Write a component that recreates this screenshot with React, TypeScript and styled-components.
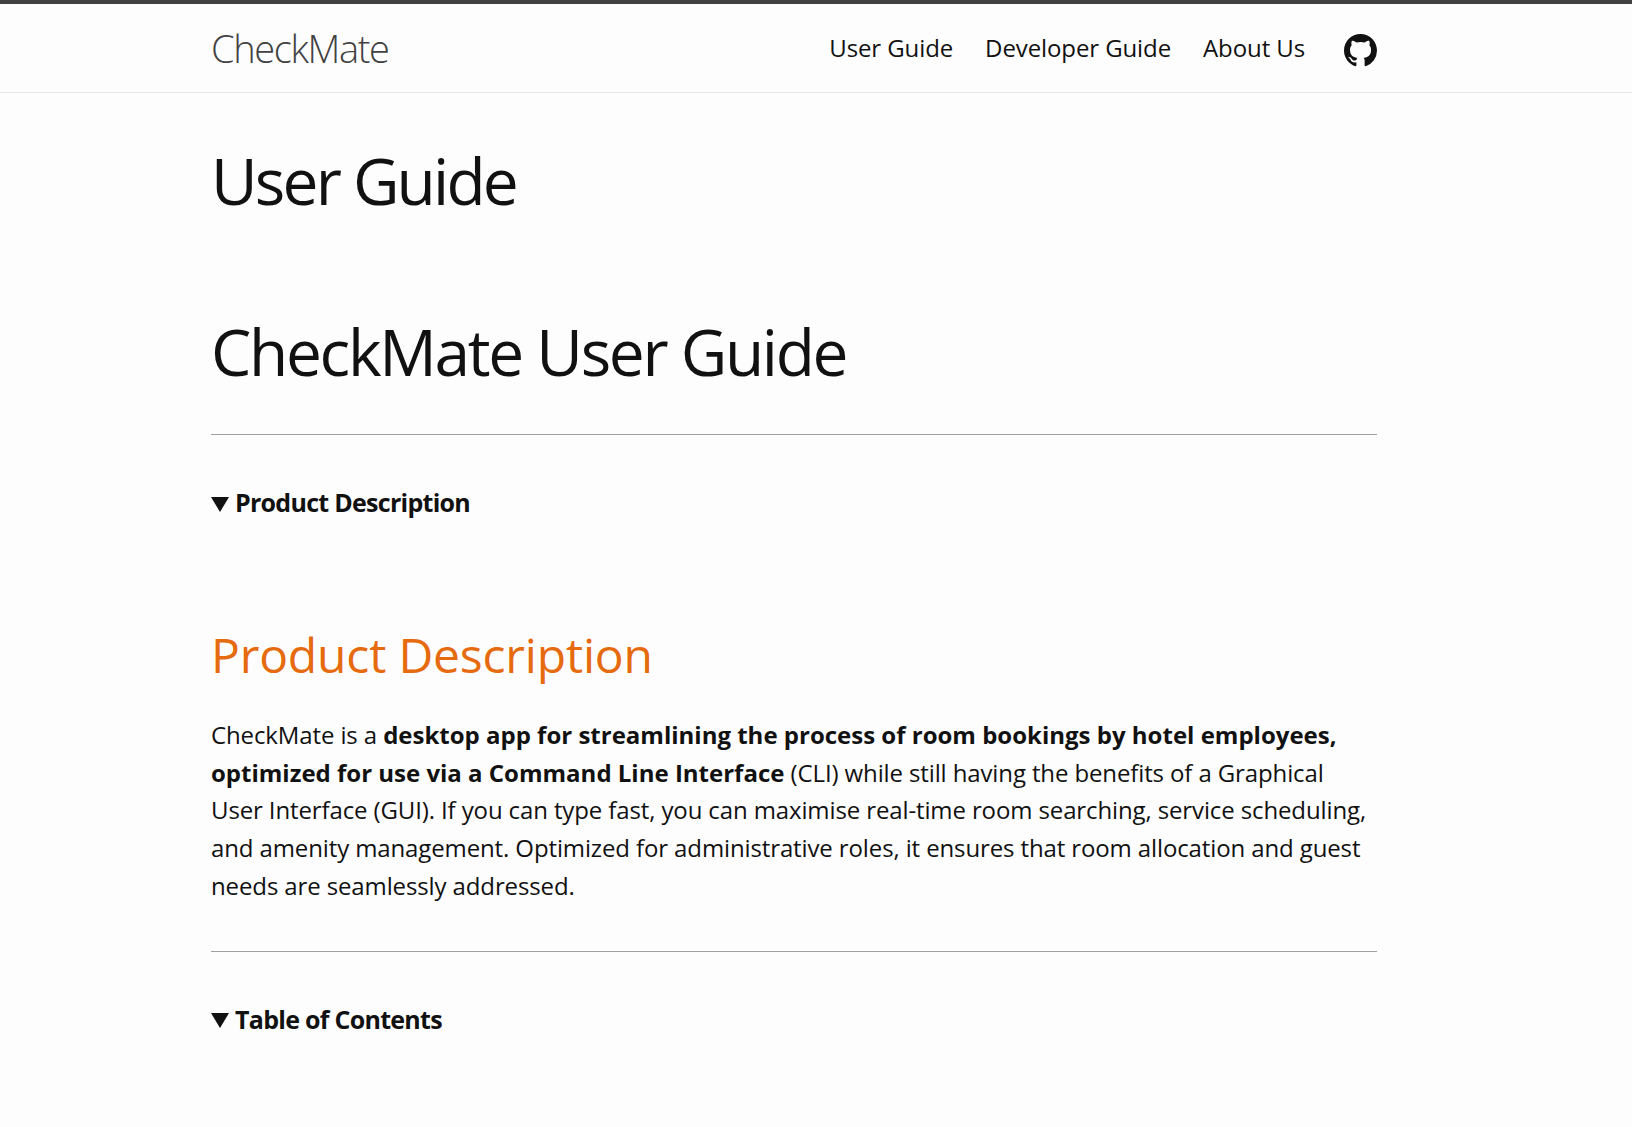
import React from 'react';
import styled, { createGlobalStyle } from 'styled-components';

const GlobalStyle = createGlobalStyle`
  html, body {
    margin: 0;
    padding: 0;
    background: #fdfdfd;
    color: #111111;
    font-family: 'Open Sans', 'Liberation Sans', sans-serif;
  }
`;

// header  --------------------------------------------------
const Header = styled.header`
  height: 88px;
  border-top: 4px solid #424242;
  border-bottom: 1px solid #e8e8e8;
`;

const Wrapper = styled.div`
  width: 1166px;
  margin-left: 211px;
`;

const HeaderRow = styled(Wrapper)`
  height: 100%;
  display: flex;
  align-items: center;
  justify-content: space-between;
`;

const Brand = styled.a`
  font-size: 38px;
  font-weight: 300;
  letter-spacing: -1.37px;
  color: #424242;
`;

const Nav = styled.nav`
  display: flex;
  align-items: center;
  gap: 32px;
`;

const NavLink = styled.a`
  padding-bottom: 2px;
  font-size: 24px;
  font-weight: 400;
  letter-spacing: -0.1px;
  color: #111111;
`;

const GithubIcon = styled.svg`
  width: 33px;
  height: 33px;
  margin: 4px 0 0 7px;
  fill: #111111;
`;

// content  -------------------------------------------------
const PageTitle = styled.h1`
  margin: 48px 0 0;
  font-size: 64px;
  line-height: 80px;
  font-weight: 400;
  letter-spacing: -2.8px;
`;

const MainHeading = styled.h1`
  margin: 91px 0 0;
  font-size: 64px;
  line-height: 80px;
  font-weight: 400;
  letter-spacing: -2.3px;
`;

const Rule = styled.hr<{ $gap: number }>`
  margin: ${({ $gap }) => $gap}px 0 0;
  border: none;
  border-top: 1px solid #a0a0a0;
`;

const Disclosure = styled.div`
  margin-top: 49px;
  display: flex;
  align-items: center;
  gap: 6px;
  font-size: 25px;
  line-height: 36px;
  font-weight: 700;
  letter-spacing: -0.72px;
`;

const Triangle = styled.span`
  width: 0;
  height: 0;
  margin-top: 4px;
  border-left: 9px solid transparent;
  border-right: 9px solid transparent;
  border-top: 15px solid #111111;
`;

const SectionHeading = styled.h2`
  margin: 105px 0 0;
  font-size: 48px;
  line-height: 60px;
  font-weight: 400;
  letter-spacing: -0.17px;
  color: #e66a0e;
`;

const Paragraph = styled.p`
  margin: 31px 0 0;
  font-size: 24px;
  line-height: 37.7px;
  font-weight: 400;
  letter-spacing: -0.12px;

  strong {
    font-weight: 700;
    letter-spacing: 0;
  }
`;

export default function App() {
  return (
    <>
      <GlobalStyle />
      <Header>
        <HeaderRow>
          <Brand>CheckMate</Brand>
          <Nav>
            <NavLink>User Guide</NavLink>
            <NavLink>Developer Guide</NavLink>
            <NavLink>About Us</NavLink>
            <GithubIcon viewBox="0 0 16 16">
              <path d="M8 0C3.58 0 0 3.58 0 8c0 3.54 2.29 6.53 5.47 7.59.4.07.55-.17.55-.38 0-.19-.01-.82-.01-1.49-2.01.37-2.53-.49-2.69-.94-.09-.23-.48-.94-.82-1.13-.28-.15-.68-.52-.01-.53.63-.01 1.08.58 1.23.82.72 1.21 1.87.87 2.33.66.07-.52.28-.87.51-1.07-1.78-.2-3.64-.89-3.64-3.95 0-.87.31-1.59.82-2.15-.08-.2-.36-1.02.08-2.12 0 0 .67-.21 2.2.82.64-.18 1.32-.27 2-.27s1.36.09 2 .27c1.53-1.04 2.2-.82 2.2-.82.44 1.1.16 1.92.08 2.12.51.56.82 1.27.82 2.15 0 3.07-1.87 3.75-3.65 3.95.29.25.54.73.54 1.48 0 1.07-.01 1.93-.01 2.2 0 .21.15.46.55.38A8.01 8.01 0 0 0 16 8c0-4.42-3.58-8-8-8z" />
            </GithubIcon>
          </Nav>
        </HeaderRow>
      </Header>
      <Wrapper as="main">
        <PageTitle>User Guide</PageTitle>
        <MainHeading>CheckMate User Guide</MainHeading>
        <Rule $gap={42} />
        <Disclosure>
          <Triangle />
          Product Description
        </Disclosure>
        <SectionHeading>Product Description</SectionHeading>
        <Paragraph>
          CheckMate is a{' '}
          <strong>
            desktop app for streamlining the process of room bookings by hotel employees, optimized
            for use via a Command Line Interface
          </strong>{' '}
          (CLI) while still having the benefits of a Graphical User Interface (GUI). If you can type
          fast, you can maximise real-time room searching, service scheduling, and amenity
          management. Optimized for administrative roles, it ensures that room allocation and guest
          needs are seamlessly addressed.
        </Paragraph>
        <Rule $gap={46} />
        <Disclosure>
          <Triangle />
          Table of Contents
        </Disclosure>
      </Wrapper>
    </>
  );
}
